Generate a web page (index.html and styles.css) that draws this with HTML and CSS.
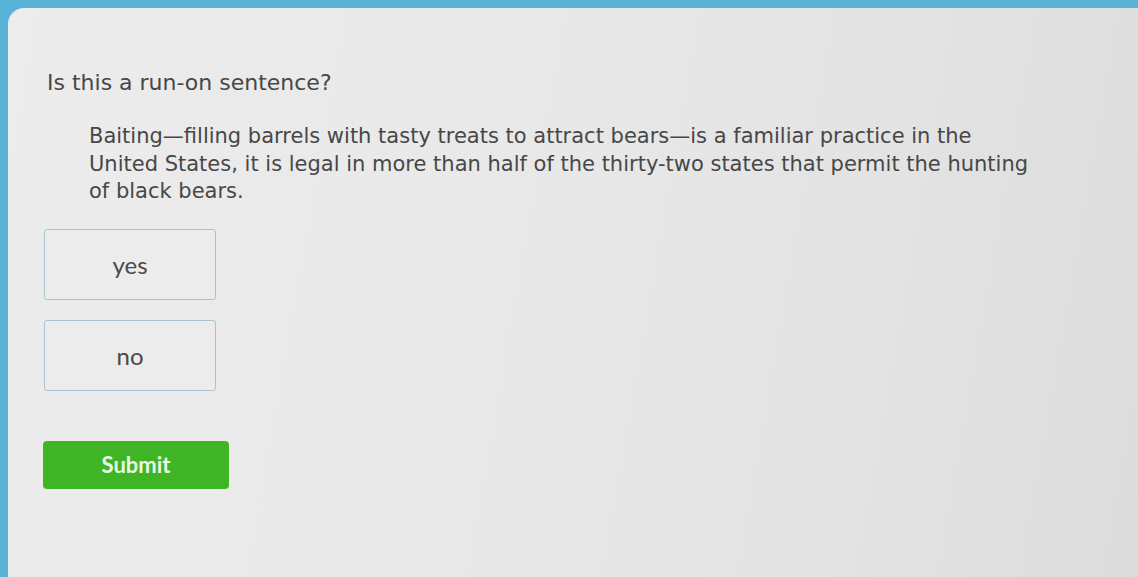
FILE: index.html
```html
<!DOCTYPE html>
<html>
<head>
<meta charset="utf-8">
<link rel="stylesheet" href="styles.css">
</head>
<body>
<div class="panel">
  <div class="question">Is this a run-on sentence?</div>
  <p class="passage">Baiting—filling barrels with tasty treats to attract bears—is a familiar practice in the United States, it is legal in more than half of the thirty-two states that permit the hunting of black bears.</p>
  <div class="choices">
    <div class="choice">yes</div>
    <div class="choice">no</div>
  </div>
  <button class="submit">Submit</button>
</div>
</body>
</html>
```
FILE: styles.css
```css
html, body {
  margin: 0;
  height: 100%;
}
body {
  background: #58b4d6;
  overflow: hidden;
}
.panel {
  margin: 8px 0 0 8px;
  height: 569px;
  box-sizing: border-box;
  border-top-left-radius: 16px;
  background: linear-gradient(100deg, #ececec 0%, #e9e9e9 40%, #e3e3e3 75%, #dcdcdc 100%);
  padding: 61px 0 0 39px;
  font-family: "DejaVu Sans", Verdana, sans-serif;
  color: #474747;
}
.question {
  font-size: 22px;
  line-height: 28px;
}
.passage {
  margin: 26px 0 0 42px;
  width: 948px;
  font-size: 21px;
  line-height: 27.5px;
}
.choices {
  margin-top: 23px;
  display: flex;
  flex-direction: column;
  gap: 20px;
  margin-left: -3px;
}
.choice {
  box-sizing: border-box;
  width: 172px;
  height: 71px;
  border: 1px solid #a9c4cc;
  border-radius: 3px;
  display: flex;
  align-items: center;
  justify-content: center;
  font-family: Lato, "Open Sans", sans-serif;
  font-size: 24px;
  color: #4a4a4a;
  background: #ececec;
}
.submit {
  margin: 50px 0 0 -4px;
  width: 186px;
  height: 48px;
  border: none;
  border-radius: 4px;
  background: #3fb424;
  color: #eaf9e4;
  font-family: Lato, "Open Sans", sans-serif;
  font-weight: 700;
  font-size: 22px;
  display: flex;
  align-items: center;
  justify-content: center;
  padding: 0;
}
```
